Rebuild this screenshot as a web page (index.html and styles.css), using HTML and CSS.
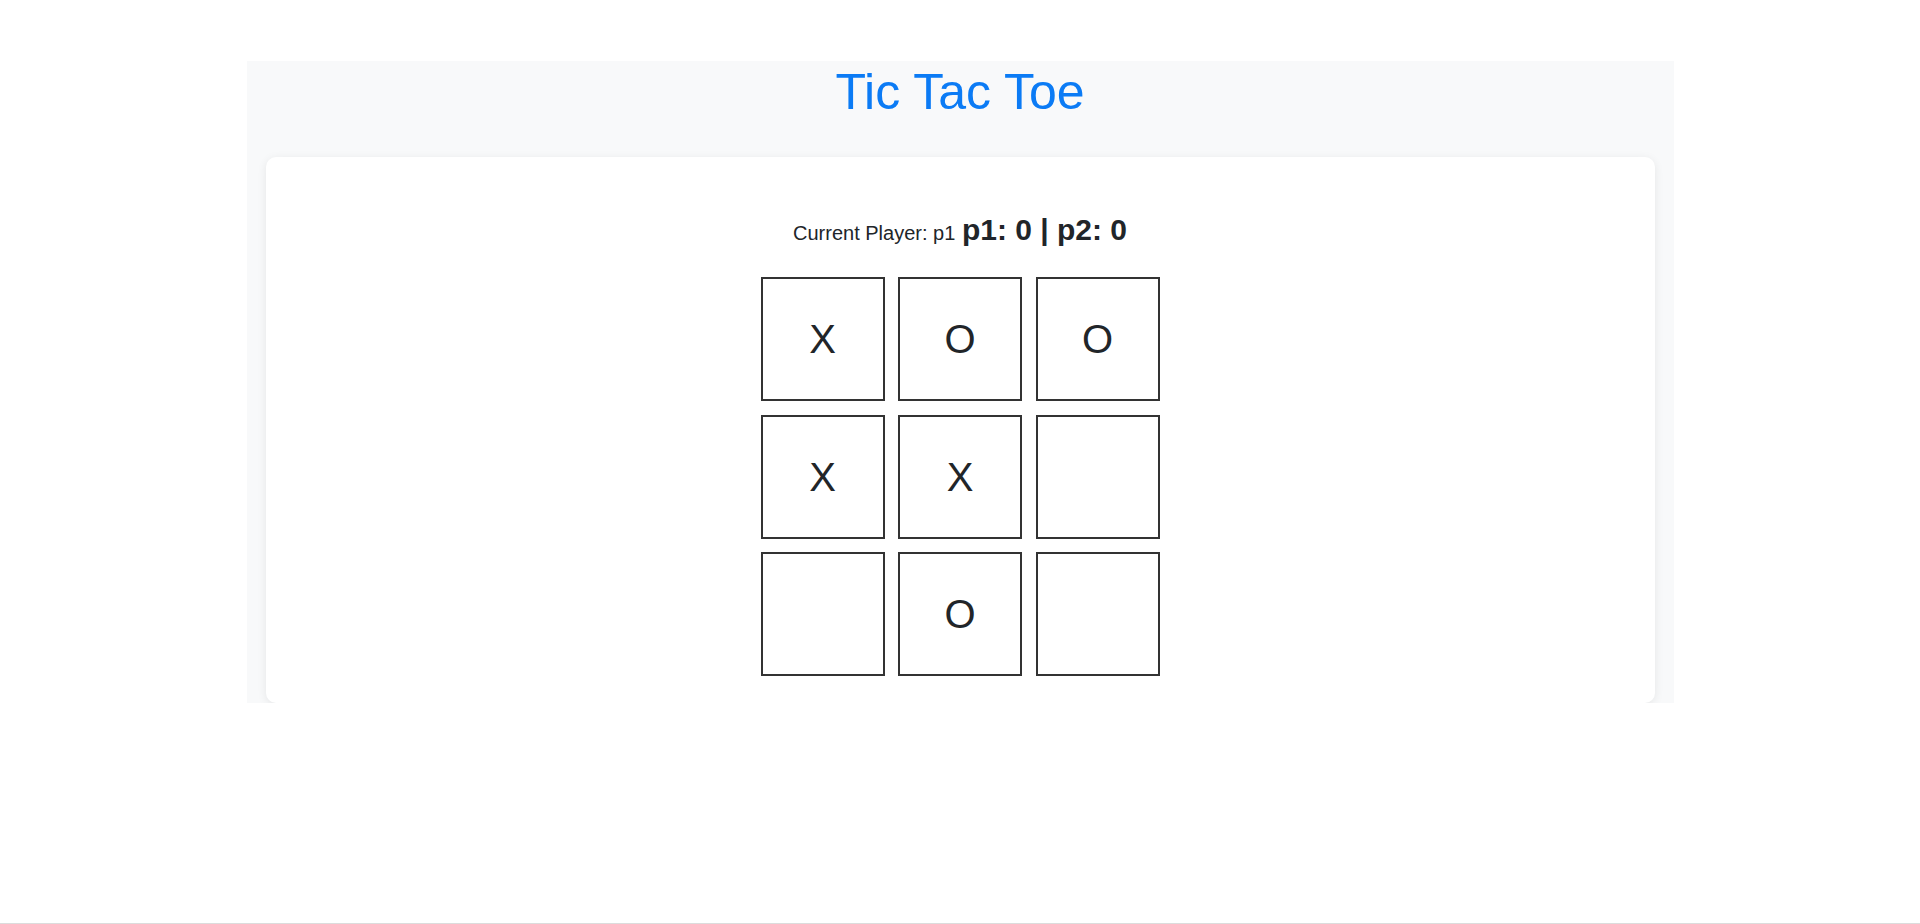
FILE: index.html
```html
<!DOCTYPE html>
<html lang="en">
<head>
<meta charset="utf-8">
<title>Tic Tac Toe</title>
<link rel="stylesheet" href="styles.css">
</head>
<body>
  <div class="container">
    <h1 class="title">Tic Tac Toe</h1>
    <div class="card">
      <div class="status">Current Player: p1 <span class="score">p1: 0 | p2: 0</span></div>
      <div class="board">
        <div class="cell">X</div>
        <div class="cell">O</div>
        <div class="cell">O</div>
        <div class="cell">X</div>
        <div class="cell">X</div>
        <div class="cell"></div>
        <div class="cell"></div>
        <div class="cell">O</div>
        <div class="cell"></div>
      </div>
    </div>
  </div>
  <div class="bottom-line"></div>
</body>
</html>
```

FILE: styles.css
```css
html, body {
  margin: 0;
  padding: 0;
  background: #ffffff;
}

body {
  font-family: "Liberation Sans", Arial, sans-serif;
  color: #212529;
  font-size: 20px;
  line-height: 1.5;
}

.container {
  width: 1427px;
  box-sizing: border-box;
  margin: 61px auto 0;
  padding: 0 19px;
  background: #f8f9fa;
  display: flex;
  flex-direction: column;
}

.title {
  margin: 1px 0 0;
  font-size: 50px;
  font-weight: 400;
  line-height: 1.2;
  color: #0b7bf5;
  text-align: center;
}

.card {
  margin-top: 35px;
  background: #ffffff;
  border-radius: 10px;
  box-shadow: 0 2px 10px rgba(0, 0, 0, 0.08);
  padding: 50px 0 27px;
  display: flex;
  flex-direction: column;
  align-items: center;
}

.status {
  text-align: center;
  font-size: 20px;
  line-height: 1.5;
}

.score {
  font-size: 30px;
  font-weight: 700;
  margin-left: 1px;
}

.board {
  margin-top: 25px;
  display: grid;
  grid-template-columns: repeat(3, 124px);
  grid-template-rows: repeat(3, 124px);
  gap: 13.5px;
}

.cell {
  box-sizing: border-box;
  border: 2px solid #333333;
  background: #ffffff;
  display: flex;
  align-items: center;
  justify-content: center;
  font-size: 40px;
  line-height: 1;
  color: #212529;
}

.bottom-line {
  position: fixed;
  left: 0;
  right: 0;
  bottom: 0;
  height: 1px;
  background: #dcdcdc;
}
```
